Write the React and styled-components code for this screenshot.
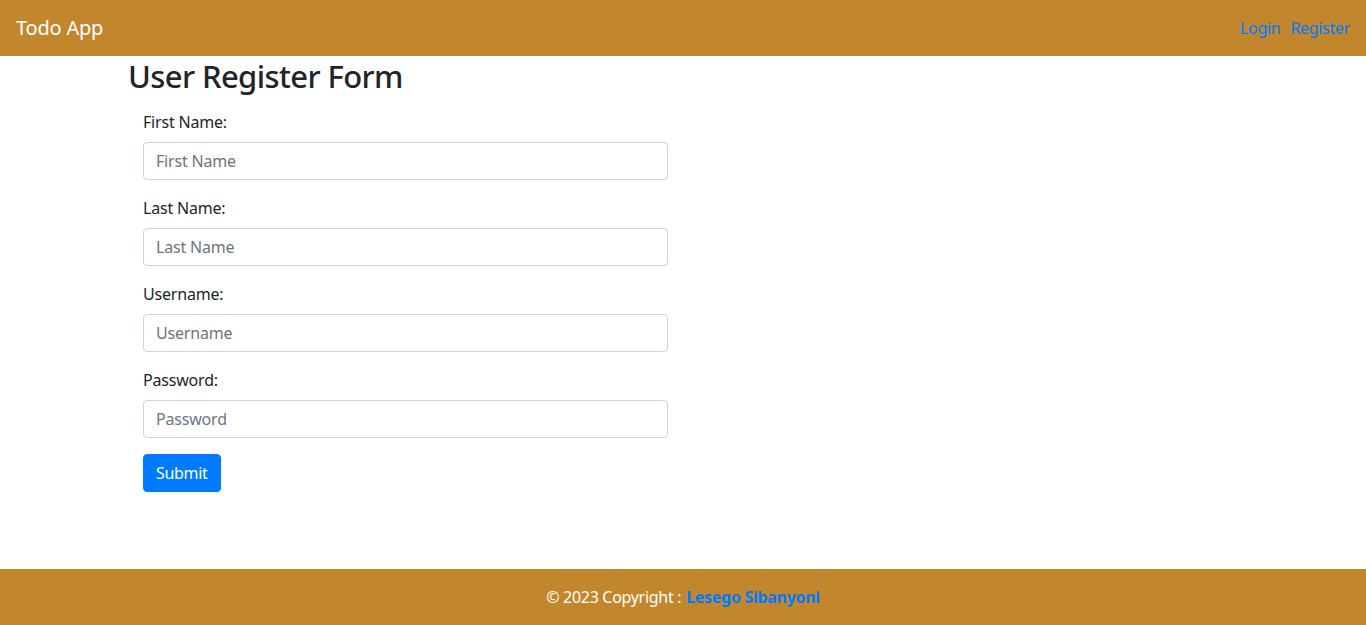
import React from "react";
import styled, { createGlobalStyle } from "styled-components";

const Global = createGlobalStyle`
  * { box-sizing: border-box; }
  body {
    margin: 0;
    font-family: "Noto Sans", "Open Sans", sans-serif;
    font-size: 16px;
    line-height: 1.5;
    color: #212529;
    background: #fff;
  }
`;

const Page = styled.div`
  min-height: 100vh;
  display: flex;
  flex-direction: column;
`;

const Navbar = styled.nav`
  height: 56px;
  background: #c2872c;
  display: flex;
  align-items: center;
  justify-content: space-between;
  padding: 0 16px;
`;

const Brand = styled.a`
  color: #fff;
  font-size: 20px;
  line-height: 30px;
  letter-spacing: -0.2px;
  text-decoration: none;
`;

const NavLinks = styled.div`
  display: flex;
  gap: 10px;
`;

const NavLink = styled.a`
  color: #007bff;
  font-size: 16px;
  letter-spacing: -0.3px;
  text-decoration: none;
`;

const Main = styled.main`
  flex: 1;
`;

const Container = styled.div`
  max-width: 1140px;
  margin: 0 auto;
  padding: 0 15px;
`;

const Title = styled.h2`
  margin: 0 0 8px;
  font-size: 31px;
  font-weight: 500;
  letter-spacing: -0.6px;
  line-height: 38px;
  padding-top: 1px;
`;

const Form = styled.form`
  width: 540px;
  padding: 7px 0 0 15px;
`;

const Group = styled.div`
  margin-bottom: 16px;
  display: flex;
  flex-direction: column;
`;

const Label = styled.label`
  margin-bottom: 8px;
  font-size: 16px;
  line-height: 24px;
  letter-spacing: -0.2px;
`;

const Input = styled.input`
  display: block;
  width: 100%;
  height: 38px;
  padding: 6px 12px;
  font: inherit;
  letter-spacing: -0.2px;
  color: #495057;
  border: 1px solid #ced4da;
  border-radius: 4px;
  background: #fff;
  &::placeholder { color: #6c757d; }
`;

const Button = styled.button`
  height: 38px;
  padding: 6px 12px;
  font: inherit;
  letter-spacing: -0.3px;
  color: #fff;
  background: #007bff;
  border: 1px solid #007bff;
  border-radius: 4px;
`;

const Footer = styled.footer`
  height: 56px;
  background: #c2872c;
  display: flex;
  align-items: center;
  justify-content: center;
  color: #fff;
  font-size: 16px;
  letter-spacing: -0.3px;
`;

const FooterLink = styled.a`
  color: #007bff;
  font-weight: 700;
  text-decoration: none;
  margin-left: 5px;
`;

const fields = [
  ["First Name:", "First Name", "text"],
  ["Last Name:", "Last Name", "text"],
  ["Username:", "Username", "text"],
  ["Password:", "Password", "password"],
];

export default function App() {
  return (
    <Page>
      <Global />
      <Navbar>
        <Brand href="#">Todo App</Brand>
        <NavLinks>
          <NavLink href="#">Login</NavLink>
          <NavLink href="#">Register</NavLink>
        </NavLinks>
      </Navbar>
      <Main>
        <Container>
          <Title>User Register Form</Title>
          <Form onSubmit={(e) => e.preventDefault()}>
            {fields.map(([l, p, t]) => (
              <Group key={l}>
                <Label>{l}</Label>
                <Input type={t} placeholder={p} />
              </Group>
            ))}
            <Button type="submit">Submit</Button>
          </Form>
        </Container>
      </Main>
      <Footer>
        © 2023 Copyright :<FooterLink href="#">Lesego Sibanyoni</FooterLink>
      </Footer>
    </Page>
  );
}
